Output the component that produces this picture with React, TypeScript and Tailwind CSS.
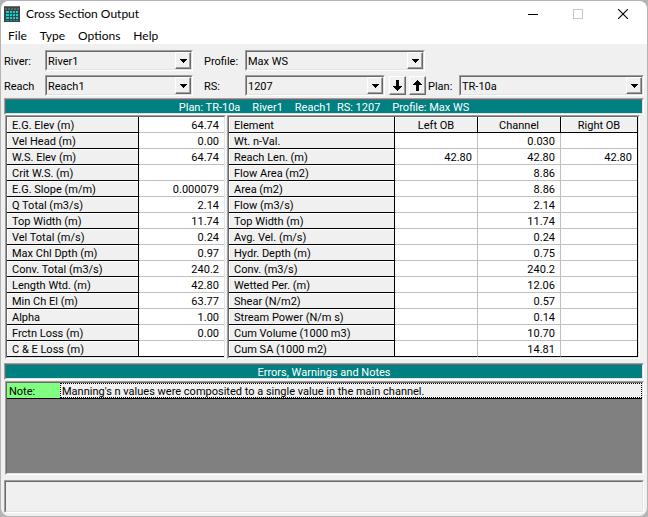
import type { ReactNode } from 'react';

type Row = [string, string];

const summary: Row[] = [
  ['E.G. Elev (m)', '64.74'],
  ['Vel Head (m)', '0.00'],
  ['W.S. Elev (m)', '64.74'],
  ['Crit W.S. (m)', ''],
  ['E.G. Slope (m/m)', '0.000079'],
  ['Q Total (m3/s)', '2.14'],
  ['Top Width (m)', '11.74'],
  ['Vel Total (m/s)', '0.24'],
  ['Max Chl Dpth (m)', '0.97'],
  ['Conv. Total (m3/s)', '240.2'],
  ['Length Wtd. (m)', '42.80'],
  ['Min Ch El (m)', '63.77'],
  ['Alpha', '1.00'],
  ['Frctn Loss (m)', '0.00'],
  ['C & E Loss (m)', ''],
];

const elements: [string, string, string, string][] = [
  ['Wt. n-Val.', '', '0.030', ''],
  ['Reach Len. (m)', '42.80', '42.80', '42.80'],
  ['Flow Area (m2)', '', '8.86', ''],
  ['Area (m2)', '', '8.86', ''],
  ['Flow (m3/s)', '', '2.14', ''],
  ['Top Width (m)', '', '11.74', ''],
  ['Avg. Vel. (m/s)', '', '0.24', ''],
  ['Hydr. Depth (m)', '', '0.75', ''],
  ['Conv. (m3/s)', '', '240.2', ''],
  ['Wetted Per. (m)', '', '12.06', ''],
  ['Shear (N/m2)', '', '0.57', ''],
  ['Stream Power (N/m s)', '', '0.14', ''],
  ['Cum Volume (1000 m3)', '', '10.70', ''],
  ['Cum SA (1000 m2)', '', '14.81', ''],
];

const cell = 'h-4 border-b p-0 pt-0.5 leading-[13px]';
const headCell = `${cell} border-r border-black bg-[#f0f0f0] font-normal shadow-[inset_1px_1px_#ffffff]`;
const valueCell = `${cell} bg-white pr-[5px] text-right`;

function Sunken({ className = '', inner = '', children }: { className?: string; inner?: string; children?: ReactNode }) {
  return (
    <div className={`border border-t-[#a0a0a0] border-r-white border-b-white border-l-[#a0a0a0] ${className}`}>
      <div className={`h-full border border-t-[#696969] border-r-[#e3e3e3] border-b-[#e3e3e3] border-l-[#696969] ${inner}`}>
        {children}
      </div>
    </div>
  );
}

function Combo({ id, value, className }: { id: string; value: string; className: string }) {
  return (
    <Sunken className={`h-[21px] ${className}`} inner="relative">
      <select
        id={id}
        className="block h-full w-full appearance-none rounded-none bg-[#f0f0f0] pt-0.5 pl-px leading-[15px] outline-none"
        defaultValue={value}
      >
        <option>{value}</option>
      </select>
      <span className="pointer-events-none absolute inset-y-0 right-0 flex w-4 items-center justify-center border border-t-white border-r-[#696969] border-b-[#696969] border-l-white bg-[#f0f0f0] shadow-[inset_-1px_-1px_#a0a0a0]">
        <svg width="7" height="4" viewBox="0 0 7 4" shapeRendering="crispEdges">
          <path d="M0 0H7V1H6V2H5V3H4V4H3V3H2V2H1V1H0Z" fill="#000" />
        </svg>
      </span>
    </Sunken>
  );
}

function StepButton({ label, up = false }: { label: string; up?: boolean }) {
  return (
    <button
      type="button"
      aria-label={label}
      className="flex h-[19px] w-[17px] items-center justify-center border border-t-white border-r-[#696969] border-b-[#696969] border-l-white bg-[#f0f0f0] shadow-[inset_-1px_-1px_#a0a0a0]"
    >
      <svg width="9" height="11" viewBox="0 0 9 11" shapeRendering="crispEdges">
        <path
          d={
            up
              ? 'M4 0H5V1H6V2H7V3H8V4H9V5H6V11H3V5H0V4H1V3H2V2H3V1H4Z'
              : 'M3 0H6V6H9V7H8V8H7V9H6V10H5V11H4V10H3V9H2V8H1V7H0V6H3Z'
          }
          fill="#000"
        />
      </svg>
    </button>
  );
}

function Banner({ children }: { children: ReactNode }) {
  return (
    <Sunken className="h-[17px]" inner="flex justify-center bg-[#008080] leading-[15px] text-white">
      {children}
    </Sunken>
  );
}

function AppIcon() {
  return (
    <svg width="16" height="16" viewBox="0 0 16 16" shapeRendering="crispEdges">
      <rect width="16" height="16" fill="#3c4444" />
      <path d="M0 0H16V1H0Z" fill="#6c7272" />
      <path d="M1 2H3V4H1ZM4 2H6V4H4ZM7 2H9V4H7ZM10 2H12V4H10ZM13 2H15V4H13Z" fill="#5c6464" />
      <path
        d="M2 5H5V7H2ZM6 5H8V7H6ZM9 5H11V7H9ZM12 5H14V7H12ZM2 8H5V10H2ZM6 8H8V10H6ZM9 8H11V10H9ZM12 8H14V10H12ZM2 11H5V13H2ZM6 11H8V13H6ZM9 11H11V13H9ZM12 11H14V13H12Z"
        fill="#00d8d8"
      />
      <path d="M2 14H5V15H2ZM6 14H8V15H6ZM9 14H11V15H9ZM12 14H14V15H12Z" fill="#00a0a0" />
    </svg>
  );
}

export default function App() {
  return (
    <div className="flex h-screen flex-col bg-[#b4b4b4] p-px font-['Roboto','Liberation_Sans',sans-serif] text-[11px] leading-[15px] text-black">
      <div className="flex flex-1 flex-col overflow-hidden rounded-lg bg-[#f0f0f0]">
        <header className="bg-white font-['Lato','Liberation_Sans',sans-serif] text-xs">
          <div className="flex h-[25px] items-center pr-0.5 pl-[3px]">
            <AppIcon />
            <h1 className="ml-1.5 flex-1">Cross Section Output</h1>
            <button type="button" aria-label="Minimize" className="flex h-6 w-[45px] items-center justify-center">
              <svg width="10" height="10" viewBox="0 0 10 10" shapeRendering="crispEdges">
                <path d="M0 5H10V6H0Z" fill="#000" />
              </svg>
            </button>
            <button type="button" aria-label="Maximize" disabled className="flex h-6 w-[45px] items-center justify-center">
              <svg width="10" height="10" viewBox="0 0 10 10" shapeRendering="crispEdges">
                <rect x="0.5" y="0.5" width="9" height="9" fill="none" stroke="#c8c8c8" />
              </svg>
            </button>
            <button type="button" aria-label="Close" className="flex h-6 w-[45px] items-center justify-center">
              <svg width="10" height="10" viewBox="0 0 10 10">
                <path d="M0 0L10 10M10 0L0 10" stroke="#000" strokeWidth="1.1" />
              </svg>
            </button>
          </div>
          <nav className="flex h-[18px] items-end gap-[13px] pl-[7px]">
            <button type="button">File</button>
            <button type="button">Type</button>
            <button type="button">Options</button>
            <button type="button">Help</button>
          </nav>
        </header>

        <main className="flex flex-1 flex-col pr-[3px] pl-[3px]">
          <div className="mt-1.5 flex items-center">
            <label htmlFor="river" className="w-[41px] pt-0.5">River:</label>
            <Combo id="river" value="River1" className="w-[148px]" />
            <label htmlFor="profile" className="ml-[11px] w-[41px] pt-0.5">Profile:</label>
            <Combo id="profile" value="Max WS" className="w-[180px]" />
          </div>
          <div className="mt-1 flex items-center">
            <label htmlFor="reach" className="w-[41px] pt-px">Reach</label>
            <Combo id="reach" value="Reach1" className="w-[148px]" />
            <label htmlFor="station" className="ml-[11px] w-[41px] pt-px">RS:</label>
            <Combo id="station" value="1207" className="w-[140px]" />
            <div className="ml-1 flex gap-[3px]">
              <StepButton label="Next river station" />
              <StepButton label="Previous river station" up />
            </div>
            <label htmlFor="plan" className="ml-0.5 w-[31px] pt-px">Plan:</label>
            <Combo id="plan" value="TR-10a" className="flex-1" />
          </div>

          <div className="mt-0.5">
            <Banner>
              <span className="flex gap-3">
                <span>Plan: TR-10a</span>
                <span>River1</span>
                <span>Reach1&nbsp; RS: 1207</span>
                <span>Profile: Max WS</span>
              </span>
            </Banner>
          </div>

          <div className="flex gap-px pr-1 pl-px">
            <Sunken className="w-[221px]">
              <table className="w-full table-fixed border-separate border-spacing-0">
                <colgroup>
                  <col className="w-[132px]" />
                  <col />
                </colgroup>
                <tbody>
                  {summary.map(([name, value], i) => (
                    <tr key={name}>
                      <th scope="row" className={`${headCell} pl-[5px] text-left`}>{name}</th>
                      <td className={`${valueCell} ${i === summary.length - 1 ? 'border-black' : 'border-[#c0c0c0]'}`}>
                        {value}
                      </td>
                    </tr>
                  ))}
                </tbody>
              </table>
            </Sunken>
            <Sunken className="flex-1" inner="border-r-[#a0a0a0]">
              <table className="w-full table-fixed border-separate border-spacing-0 border-r border-black">
                <colgroup>
                  <col className="w-[166px]" />
                  <col className="w-[83px]" />
                  <col className="w-[83px]" />
                  <col />
                </colgroup>
                <thead>
                  <tr>
                    <th scope="col" className={`${headCell} pl-[5px] text-left`}>Element</th>
                    {['Left OB', 'Channel', 'Right OB'].map((name) => (
                      <th key={name} scope="col" className={`${headCell} text-center last:border-r-0`}>
                        {name}
                      </th>
                    ))}
                  </tr>
                </thead>
                <tbody>
                  {elements.map(([name, ...values], r) => (
                    <tr key={name}>
                      <th scope="row" className={`${headCell} pl-[5px] text-left`}>{name}</th>
                      {values.map((value, c) => (
                        <td
                          key={c}
                          className={`${valueCell} border-r border-r-[#c0c0c0] last:border-r-0 ${
                            r === elements.length - 1 ? 'border-b-black' : 'border-b-[#c0c0c0]'
                          }`}
                        >
                          {value}
                        </td>
                      ))}
                    </tr>
                  ))}
                </tbody>
              </table>
            </Sunken>
          </div>

          <div className="mt-1">
            <Banner>Errors, Warnings and Notes</Banner>
          </div>

          <Sunken className="mt-px ml-px flex-1" inner="bg-[#808080]">
            <dl className="flex h-4 border-b border-black bg-[#f0f0f0]">
              <dt className="w-[53px] bg-[#80ff80] pt-px pl-0.5">Note:</dt>
              <dd className="flex-1 border border-dotted border-black pl-px">
                Manning's n values were composited to a single value in the main channel.
              </dd>
            </dl>
          </Sunken>
          <Sunken className="mt-[5px] mb-[3px] h-[33px]" />
        </main>
      </div>
    </div>
  );
}
